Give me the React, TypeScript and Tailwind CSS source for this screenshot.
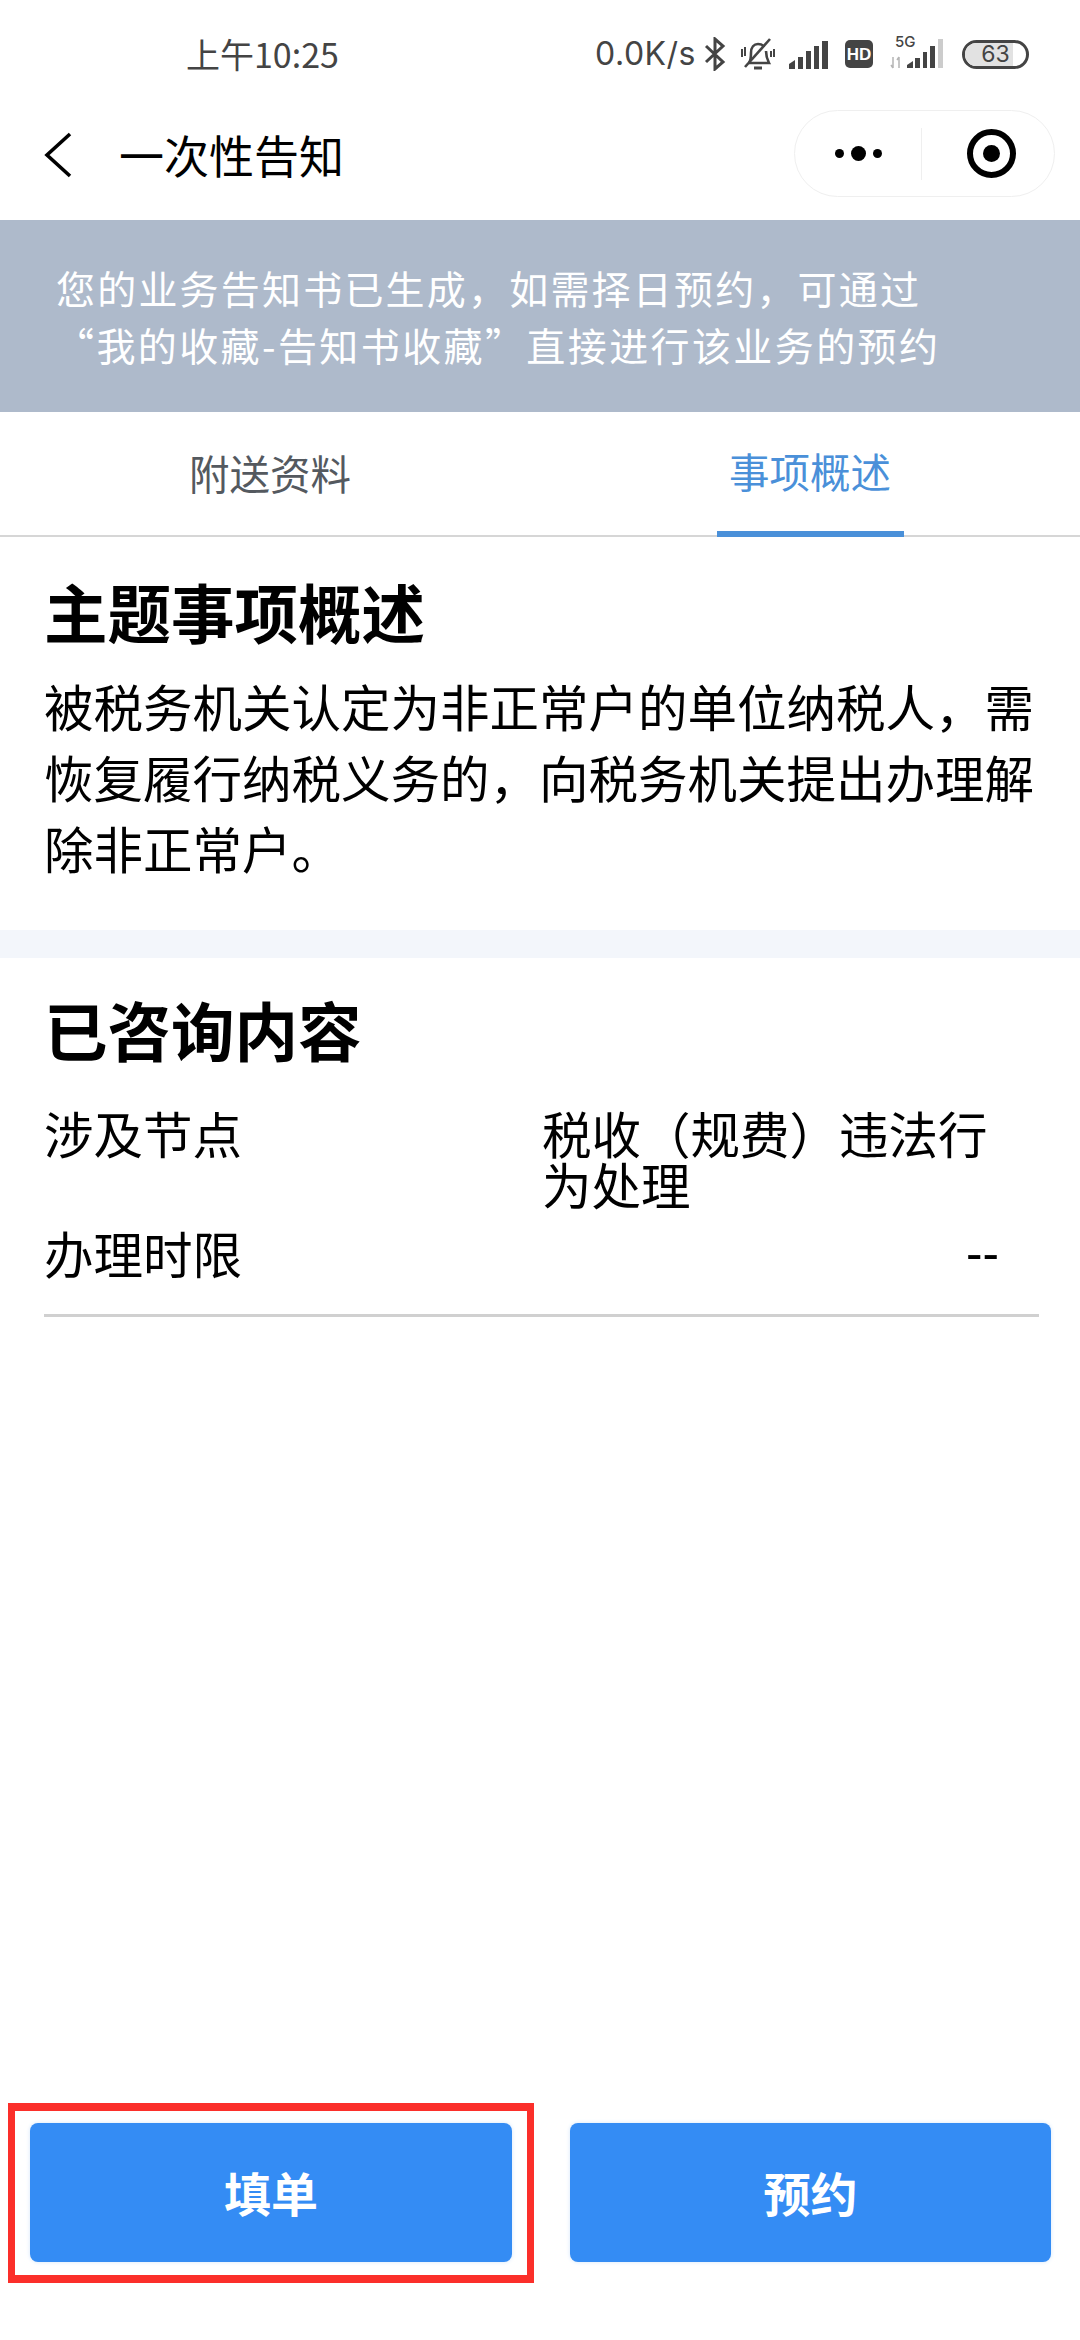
import React from 'react';

const cjk = "font-['Noto_Sans_CJK_SC','Noto_Sans',sans-serif]";

function StatusIcons() {
  return (
    <div className="flex items-center text-[#444444]">
      <span className="font-['Inter',sans-serif] text-[32px] leading-none font-normal tracking-[0.5px]">0.0K/s</span>
      {/* bluetooth */}
      <svg width="22" height="34" viewBox="0 0 22 34" className="ml-[8px]" fill="none" stroke="#444" strokeWidth="3">
        <path d="M2 9l17 16-8 7V2l8 7L2 25" />
      </svg>
      {/* muted bell */}
      <svg width="34" height="34" viewBox="0 0 34 34" className="ml-[15px]" fill="none" stroke="#444" strokeWidth="2.6">
        <path d="M8 26c2-3 2-6 2-10 0-6 3-9 7-9 3 0 5 1 6 3M25 14c0 5 1 8 3 12H8" />
        <path d="M13 31h8" strokeWidth="3" />
        <path d="M4 30L29 2" />
        <path d="M1 12v8M4 10v9M33 12v8M30 14v6" strokeWidth="2" />
      </svg>
      {/* signal 1 */}
      <svg width="40" height="29" viewBox="0 0 40 29" className="ml-[14px]" fill="#444">
        <path d="M0 24l6-4v9H0zM9 17h5v12H9zM17 11h5v18h-5zM25 6h5v23h-5zM33 1h6v28h-6z" />
      </svg>
      {/* HD */}
      <div className="ml-[16px] w-[28px] h-[28px] rounded-[5px] bg-[#444444] flex items-center justify-center text-white font-['Liberation_Sans',sans-serif] font-bold text-[17px] leading-none">
        HD
      </div>
      {/* 5G signal */}
      <div className="relative ml-[17px] w-[57px] h-[32px]">
        <span className="absolute left-[5px] top-[-4px] font-['Inter',sans-serif] text-[15px] leading-none font-medium">5G</span>
        <svg width="57" height="32" viewBox="0 0 57 32" className="absolute left-0 top-0">
          <path d="M3 19v11M1 27l2 3M9 30V19M7 22l2-3" stroke="#b5b5b5" strokeWidth="1.5" fill="none" />
          <path d="M17 27l6-4v7h-6zM25 20h5v10h-5zM33 14h4v16h-4zM40 8h5v22h-5z" fill="#444" />
          <path d="M48 1h5v29h-5z" fill="#cccccc" />
        </svg>
      </div>
      {/* battery */}
      <div className="ml-[15px] relative w-[67px] h-[29px] rounded-full border-[3px] border-[#444444] overflow-hidden flex items-center justify-center">
        <div className="absolute left-0 top-0 bottom-0 w-[48px] bg-[#e2e2e2]" />
        <span className="relative font-['Inter',sans-serif] text-[23px] leading-none font-normal">63</span>
      </div>
    </div>
  );
}

function Capsule() {
  return (
    <div className="w-[261px] h-[87px] rounded-full border border-[#efefef] flex items-center">
      <div className="flex-1 flex items-center justify-center gap-[7px]">
        <span className="w-[9px] h-[9px] rounded-full bg-black" />
        <span className="w-[15px] h-[15px] rounded-full bg-black" />
        <span className="w-[9px] h-[9px] rounded-full bg-black" />
      </div>
      <div className="w-px h-[52px] bg-[#efefef]" />
      <div className="flex-1 flex items-center justify-center pl-[6px]">
        <span className="w-[49px] h-[49px] rounded-full border-[6px] border-black flex items-center justify-center">
          <span className="w-[17px] h-[17px] rounded-full bg-black" />
        </span>
      </div>
    </div>
  );
}

export default function App() {
  return (
    <div className={`w-[1080px] h-[2340px] bg-white flex flex-col ${cjk}`}>
      {/* Status bar */}
      <div className="h-[110px] flex items-center pl-[186px] pr-[51px] justify-between pb-[2px]">
        <span className="text-[34px] leading-none text-[#444444] font-normal">上午10:25</span>
        <StatusIcons />
      </div>

      {/* Nav */}
      <div className="h-[110px] flex items-start pl-[44px] pr-[25px]">
        <svg width="28" height="46" viewBox="0 0 28 46" className="mt-[22px]" fill="none" stroke="#000" strokeWidth="3.6">
          <path d="M26 2L3 23l23 21" />
        </svg>
        <h1 className="ml-[47px] mt-[15px] text-[45px] leading-[60px] text-black font-normal">一次性告知</h1>
        <div className="ml-auto">
          <Capsule />
        </div>
      </div>

      {/* Notice banner */}
      <div className="h-[192px] bg-[#aebacb] text-white text-[39px] leading-[57px] pt-[39px] tracking-[2.2px]">
        <p className="pl-[56px]">您的业务告知书已生成，如需择日预约，可通过</p>
        <p className="pl-[55px] tracking-[2.4px]">“我的收藏-告知书收藏”直接进行该业务的预约</p>
      </div>

      {/* Tabs */}
      <div className="h-[125px] flex border-b-2 border-[#d6d6d6] text-[40.5px] leading-none">
        <div className="flex-1 flex items-center justify-center text-[#54595f]">附送资料</div>
        <div className="flex-1 flex justify-center">
          <div className="w-[187px] h-[125px] border-b-[6px] border-[#4a90d9] flex items-center justify-center text-[#4a90d9] whitespace-nowrap">
            事项概述
          </div>
        </div>
      </div>

      {/* Overview */}
      <section className="px-[44px] pt-[28px] h-[393px] text-black">
        <h2 className="text-[63.5px] leading-[90px] font-bold">主题事项概述</h2>
        <p className="mt-[15px] text-[49.5px] leading-[71px]">
          被税务机关认定为非正常户的单位纳税人，需恢复履行纳税义务的，向税务机关提出办理解除非正常户。
        </p>
      </section>
      <div className="h-[28px] bg-[#f3f6fb]" />

      {/* Consulted content */}
      <section className="pl-[44px] pr-[41px] pt-[25px] text-black">
        <h2 className="text-[63.5px] leading-[90px] font-bold">已咨询内容</h2>
        <div className="mt-[34px] flex text-[49.5px] leading-[51px]">
          <div className="w-[498px]">涉及节点</div>
          <div className="w-[460px]">税收（规费）违法行为处理</div>
        </div>
        <div className="mt-[18px] pb-[36px] flex justify-between text-[49.5px] leading-[51px] border-b-[3px] border-[#d0d0d0]">
          <div>办理时限</div>
          <div className="pr-[40px] font-['Liberation_Sans',sans-serif]">--</div>
        </div>
      </section>

      {/* Bottom actions */}
      <div className="mt-auto mb-[57px] flex pl-[8px]">
        <div className="w-[526px] h-[180px] border-y-[8px] border-x-[7px] border-[#fb2f2a] px-[15px] pt-[12px]">
          <button className="w-full h-[139px] rounded-[8px] bg-[#348cf4] text-white text-[47px] font-bold shadow-[0_0_4px_#d5e7fb]">
            填单
          </button>
        </div>
        <div className="pt-[20px] pl-[36px]">
          <button className="w-[481px] h-[139px] rounded-[8px] bg-[#348cf4] text-white text-[47px] font-bold shadow-[0_0_4px_#d5e7fb]">
            预约
          </button>
        </div>
      </div>
    </div>
  );
}
